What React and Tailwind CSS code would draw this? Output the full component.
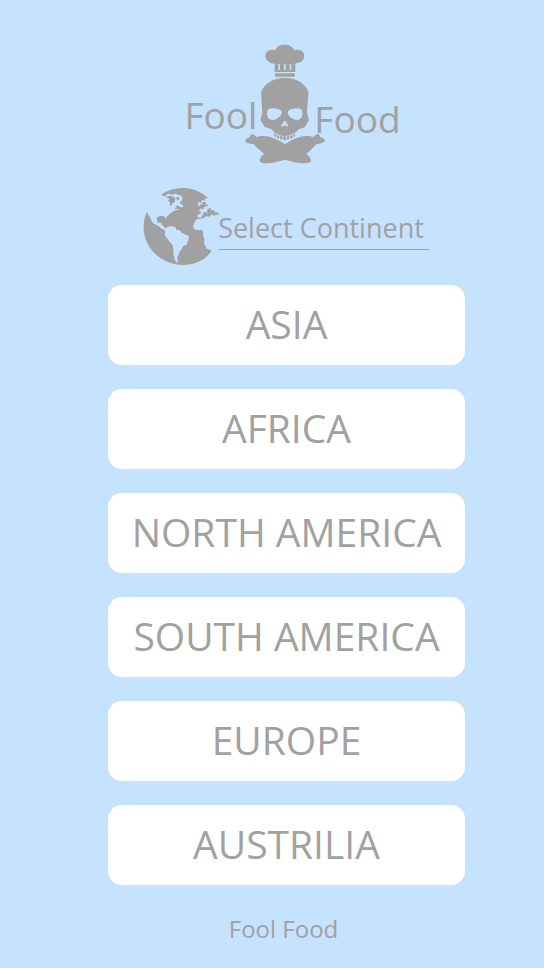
const continents = ["ASIA", "AFRICA", "NORTH AMERICA", "SOUTH AMERICA", "EUROPE", "AUSTRILIA"];

function ChefSkull() {
  return (
    <svg className="h-[120px] w-[81px] shrink-0 fill-[#a1a1a1]" viewBox="30 27 243 360" aria-hidden="true">
      <path d="M119 86C103 85 91 76 91 63C91 49 105 41 121 46C125 34 135 29 149 29C163 29 174 35 178 46C195 41 208 49 208 63C208 76 196 84 181 85V111H119Z" />
      <path d="M121 115H179Q181 120 179 125H121Q118 120 121 115Z" />
      <path className="fill-[#c5e2ff]" d="M130 88h5v17h-5zM147 88h5v17h-5zM164 88h5v17h-5z" />
      <path d="M78 172C89 143 119 128 150 128C182 128 211 144 221 172C217 194 218 213 216 233L222 255L210 276L188 284C186 293 178 290 174 297C162 301 160 303 148 303C136 303 136 300 124 297C121 291 113 292 111 283L89 276L76 255L82 234C80 213 80 194 78 172Z" />
      <path className="fill-[#c5e2ff]" d="M98 224C108 217 132 219 139 228C143 236 137 244 129 249C122 255 110 258 102 251C95 245 95 232 98 224Z" />
      <path className="fill-[#c5e2ff]" d="M200 224C191 217 166 220 160 228C156 237 162 244 170 249C178 255 189 258 196 251C203 245 204 232 200 224Z" />
      <path className="fill-[#c5e2ff]" d="M149 256C145 262 140 269 138 275C144 276 147 271 149 271C151 271 155 276 160 274C158 267 153 262 149 256Z" />
      <path d="M117 293L124 299L123 307L118 303ZM126 300L132 302L133 312L126 309ZM135 303L142 304V314L136 313ZM145 304H153V315H145ZM156 304L163 303L162 313L156 314ZM166 302L172 300V309L166 312ZM175 299L181 293L180 303L175 307Z" />
      <path d="M52 297C57 300 62 303 65 306C73 303 78 302 87 303C108 304 133 315 150 328C167 315 192 304 213 303C222 302 227 303 234 306L247 297C252 297 256 302 256 307C264 308 271 315 269 319C265 325 254 327 246 327C239 331 235 337 229 343L214 358C223 363 230 374 227 380C218 386 195 386 180 382L150 374L121 382C105 386 82 386 75 380C72 374 78 362 88 358L72 343C65 337 61 331 54 327C45 328 35 325 31 319C29 315 38 308 44 307C45 301 48 298 52 297Z" />
    </svg>
  );
}

function Globe() {
  return (
    <svg className="h-[77px] w-[77px] shrink-0 fill-[#a1a1a1]" viewBox="24 24 231 231" aria-hidden="true">
      <path d="M78 44C98 30 122 24 146 24C175 25 200 36 218 53L209 56L212 62L203 60L197 68L190 66L188 77L193 78L196 72L202 75L201 68L208 65L214 69L210 75L219 73L218 78L207 81L206 87L196 86L191 94L200 96L194 102L188 103L187 112L198 113L203 104L207 97L213 96L220 105L216 97L218 87L226 84L229 91L236 90L239 96L250 98L252 106L243 104L238 107L229 103L226 109L218 110L213 107L208 114L194 116L184 118L178 128L174 142L180 149L193 151L199 149L204 154V166L208 177L207 189L212 200L216 206L230 212C213 239 181 255 143 255C75 253 27 201 26 145C26 126 29 109 36 94L41 109L43 104L48 120L54 129L63 134L71 138L77 144L87 149L92 144L85 139L79 133L78 128L69 128L65 120L67 111L79 107L87 109L91 114L95 117L95 110L103 103L112 96L120 91L130 89L126 84L133 80L145 82L143 75L137 72L134 65L141 62L143 53L137 47L126 43L119 41L111 44L103 41L96 43L92 49L84 48Z" />
      <path d="M92 51L104 47L117 50L121 57L119 67L113 70L109 78L104 74L106 68L99 62L104 57L98 54Z" />
      <path d="M119 86L127 76L134 80L127 87ZM123 53L130 50L134 56L128 62Z" />
      <path className="fill-[#c5e2ff]" d="M87 149L98 140L110 139L121 141L124 149L134 151L141 159L160 167L162 174L157 186L155 194L145 198L140 208L133 216L131 224L126 232L129 238L127 246L131 250L124 247L118 236L115 219V205L111 192L102 183L89 165L91 156Z" />
    </svg>
  );
}

export default function App() {
  return (
    <main className="flex min-h-screen flex-col bg-[#c5e2ff] pr-[79px] pl-[108px] pt-11 font-['Open_Sans','Noto_Sans',sans-serif] text-[#a1a1a1]">
      <h1 className="flex justify-center pl-3 text-[37px] leading-[40px]">
        <span className="-mr-3 pt-[51px]">Fool</span>
        <ChefSkull />
        <span className="-ml-3 pt-[55px]">Food</span>
      </h1>
      <header className="mt-6 flex justify-center">
        <Globe />
        <h2 className="-ml-0.5 mt-4 h-[46px] border-b border-[#93a4b5] pr-1.5 text-[27px] leading-[48px] whitespace-nowrap">Select Continent</h2>
      </header>
      <nav className="mt-5 flex flex-col gap-6" aria-label="Continents">
        {continents.map((name) => (
          <button key={name} type="button" className="h-20 rounded-[14px] bg-white pb-0.5 text-[39px] leading-[40px] whitespace-nowrap">
            {name}
          </button>
        ))}
      </nav>
      <footer className="mt-7 pr-1.5 pb-5 text-center text-2xl">Fool Food</footer>
    </main>
  );
}
